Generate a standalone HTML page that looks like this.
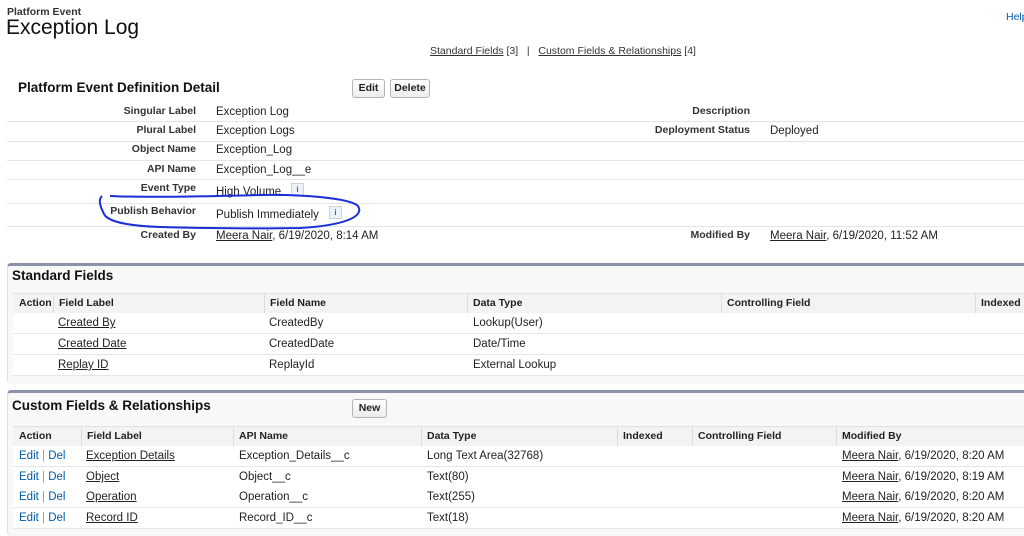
<!DOCTYPE html>
<html><head><style>
body{margin:0;width:1024px;height:533px;overflow:hidden;background:#fff;font-family:"Liberation Sans",Arial,sans-serif;font-size:11.5px;color:#222;position:relative}
.a{position:absolute;white-space:nowrap}
.b{font-weight:bold}
.u{text-decoration:underline}
.lbl{position:absolute;right:828px;font-weight:bold;font-size:10.5px;color:#333;white-space:nowrap}
.rl{position:absolute;right:274px;font-weight:bold;font-size:10.5px;color:#333;white-space:nowrap}
.ln{position:absolute;left:7px;right:0;height:1px;background:#e4e4e4}
.btn{position:absolute;border:1px solid #b5b5b5;border-radius:3px;background:linear-gradient(#fff,#ececec);font-weight:bold;font-size:10.5px;text-align:center;line-height:17px;height:17px}
.box{position:absolute;left:7px;right:0;background:#f8f8f8;border-top:3px solid #8b93a8;border-left:1px solid #e0e0e0;border-radius:4px 0 0 4px}
.hdr{position:absolute;left:13px;right:0;background:#f2f3f3;border-top:1px solid #e0e3e5;border-bottom:1px solid #e0e3e5;height:19px}
.h{position:absolute;top:3px;font-weight:bold;font-size:10.5px;white-space:nowrap}
.dv{position:absolute;top:0;width:1px;height:19px;background:#dcdcdc}
.row{position:absolute;left:13px;right:0;height:20px;background:#fff;border-bottom:1px solid #e6e6e6}
.c{position:absolute;top:4px;white-space:nowrap}
.lk{color:#015ba7}
.i{position:absolute;width:11px;height:11px;border:1px solid #c8d4e0;background:#eef3f8;color:#2a6fb6;font-size:8px;font-weight:bold;text-align:center;line-height:11px}
</style></head><body>
<div class="a b" style="left:7px;top:6px;font-size:10.5px;color:#333">Platform Event</div>
<div class="a" style="left:6px;top:16px;font-size:21px;color:#111">Exception Log</div>
<div class="a" style="left:1006px;top:11px;font-size:10.5px;color:#015ba7">Help</div>
<div class="a" style="left:430px;top:45px;font-size:10.5px;color:#333"><span class="u">Standard Fields</span> [3] &nbsp;&nbsp;| &nbsp;&nbsp;<span class="u">Custom Fields &amp; Relationships</span> [4]</div>

<div class="a b" style="left:18px;top:80px;font-size:13.5px;color:#111">Platform Event Definition Detail</div>
<div class="btn" style="left:352px;top:79px;width:31px">Edit</div>
<div class="btn" style="left:390px;top:79px;width:38px">Delete</div>

<div class="lbl" style="top:105px">Singular Label</div><div class="a" style="left:216px;top:106px">Exception Log</div>
<div class="rl" style="top:105px">Description</div>
<div class="ln" style="top:121px"></div>
<div class="lbl" style="top:124px">Plural Label</div><div class="a" style="left:216px;top:125px">Exception Logs</div>
<div class="rl" style="top:124px">Deployment Status</div><div class="a" style="left:770px;top:125px">Deployed</div>
<div class="ln" style="top:141px"></div>
<div class="lbl" style="top:143px">Object Name</div><div class="a" style="left:216px;top:144px">Exception_Log</div>
<div class="ln" style="top:160px"></div>
<div class="lbl" style="top:163px">API Name</div><div class="a" style="left:216px;top:164px">Exception_Log__e</div>
<div class="ln" style="top:179px"></div>
<div class="lbl" style="top:182px">Event Type</div><div class="a" style="left:216px;top:186px">High Volume</div>
<div class="i" style="left:291px;top:183px">i</div>
<div class="ln" style="top:203px"></div>
<div class="lbl" style="top:205px">Publish Behavior</div><div class="a" style="left:216px;top:209px">Publish Immediately</div>
<div class="i" style="left:329px;top:206px">i</div>
<div class="ln" style="top:226px"></div>
<div class="lbl" style="top:229px">Created By</div><div class="a" style="left:216px;top:230px"><span class="u">Meera Nair</span>, 6/19/2020, 8:14 AM</div>
<div class="rl" style="top:229px">Modified By</div><div class="a" style="left:770px;top:230px"><span class="u">Meera Nair</span>, 6/19/2020, 11:52 AM</div>

<svg class="a" style="left:0;top:0" width="1024" height="533"><path d="M110 196 C150 198 220 196 260 195 C300 194 350 198 358 206 C364 215 350 225 300 228 C250 229 200 228 160 227 C130 226 108 222 104 214 C100 206 98 200 102 196" fill="none" stroke="#1b2fd6" stroke-width="2"/></svg>

<div class="box" style="top:263px;height:118px"></div>
<div class="a b" style="left:12px;top:268px;font-size:13.5px;color:#111">Standard Fields</div>
<div class="hdr" style="top:293px">
<div class="h" style="left:6px">Action</div><div class="dv" style="left:40px"></div>
<div class="h" style="left:46px">Field Label</div><div class="dv" style="left:251px"></div>
<div class="h" style="left:257px">Field Name</div><div class="dv" style="left:454px"></div>
<div class="h" style="left:460px">Data Type</div><div class="dv" style="left:708px"></div>
<div class="h" style="left:714px">Controlling Field</div><div class="dv" style="left:962px"></div>
<div class="h" style="left:968px">Indexed</div></div>
<div class="row" style="top:313px"><div class="c u" style="left:45px">Created By</div><div class="c" style="left:256px">CreatedBy</div><div class="c" style="left:460px">Lookup(User)</div></div>
<div class="row" style="top:334px"><div class="c u" style="left:45px">Created Date</div><div class="c" style="left:256px">CreatedDate</div><div class="c" style="left:460px">Date/Time</div></div>
<div class="row" style="top:355px"><div class="c u" style="left:45px">Replay ID</div><div class="c" style="left:256px">ReplayId</div><div class="c" style="left:460px">External Lookup</div></div>

<div class="box" style="top:390px;height:143px"></div>
<div class="a b" style="left:12px;top:398px;font-size:13.5px;color:#111">Custom Fields &amp; Relationships</div>
<div class="btn" style="left:352px;top:399px;width:33px">New</div>
<div class="hdr" style="top:426px">
<div class="h" style="left:6px">Action</div><div class="dv" style="left:68px"></div>
<div class="h" style="left:74px">Field Label</div><div class="dv" style="left:220px"></div>
<div class="h" style="left:226px">API Name</div><div class="dv" style="left:408px"></div>
<div class="h" style="left:414px">Data Type</div><div class="dv" style="left:604px"></div>
<div class="h" style="left:610px">Indexed</div><div class="dv" style="left:679px"></div>
<div class="h" style="left:685px">Controlling Field</div><div class="dv" style="left:823px"></div>
<div class="h" style="left:829px">Modified By</div></div>
<div class="row" style="top:446px"><div class="c lk" style="left:6px">Edit <span style="color:#999">|</span> Del</div><div class="c u" style="left:73px">Exception Details</div><div class="c" style="left:226px">Exception_Details__c</div><div class="c" style="left:414px">Long Text Area(32768)</div><div class="c" style="left:829px"><span class="u">Meera Nair</span>, 6/19/2020, 8:20 AM</div></div>
<div class="row" style="top:467px"><div class="c lk" style="left:6px">Edit <span style="color:#999">|</span> Del</div><div class="c u" style="left:73px">Object</div><div class="c" style="left:226px">Object__c</div><div class="c" style="left:414px">Text(80)</div><div class="c" style="left:829px"><span class="u">Meera Nair</span>, 6/19/2020, 8:19 AM</div></div>
<div class="row" style="top:487px"><div class="c lk" style="left:6px">Edit <span style="color:#999">|</span> Del</div><div class="c u" style="left:73px">Operation</div><div class="c" style="left:226px">Operation__c</div><div class="c" style="left:414px">Text(255)</div><div class="c" style="left:829px"><span class="u">Meera Nair</span>, 6/19/2020, 8:20 AM</div></div>
<div class="row" style="top:508px"><div class="c lk" style="left:6px">Edit <span style="color:#999">|</span> Del</div><div class="c u" style="left:73px">Record ID</div><div class="c" style="left:226px">Record_ID__c</div><div class="c" style="left:414px">Text(18)</div><div class="c" style="left:829px"><span class="u">Meera Nair</span>, 6/19/2020, 8:20 AM</div></div>
</body></html>
